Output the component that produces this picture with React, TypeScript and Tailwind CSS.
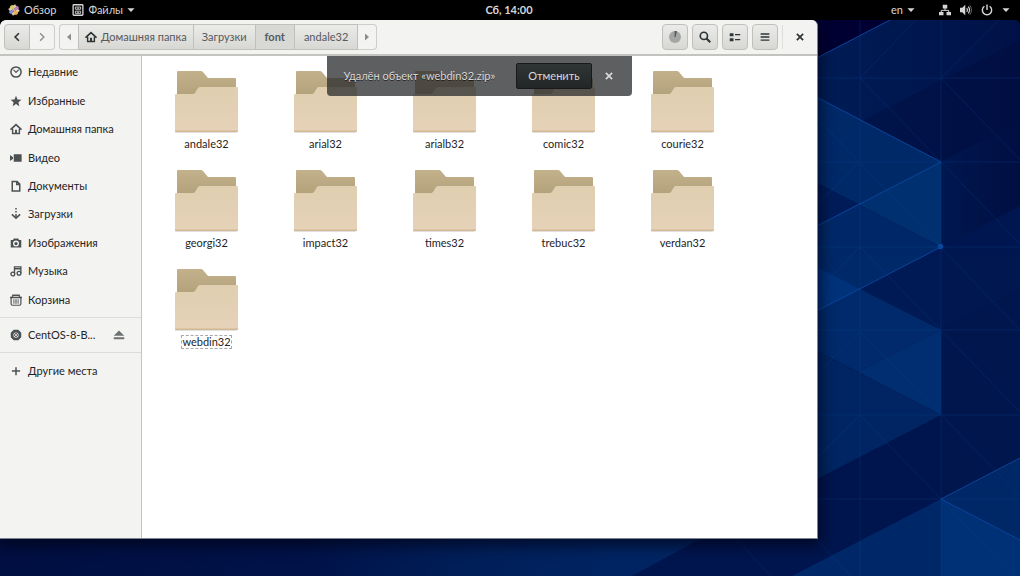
import React from 'react';

const places = [
  { name: 'Недавние', icon: 'recent' },
  { name: 'Избранные', icon: 'star' },
  { name: 'Домашняя папка', icon: 'home' },
  { name: 'Видео', icon: 'video' },
  { name: 'Документы', icon: 'doc' },
  { name: 'Загрузки', icon: 'download' },
  { name: 'Изображения', icon: 'camera' },
  { name: 'Музыка', icon: 'music' },
  { name: 'Корзина', icon: 'trash' },
];

const folders = [
  'andale32', 'arial32', 'arialb32', 'comic32', 'courie32',
  'georgi32', 'impact32', 'times32', 'trebuc32', 'verdan32',
  'webdin32',
];

const shapes: Record<string, React.ReactNode> = {
  recent: <g fill="none" stroke="currentColor"><circle cx="8" cy="8" r="6.8" strokeWidth="2" /><path d="M4.800 5.200 8 8.500 11.500 5" strokeWidth="1.500" /></g>,
  star: <path fill="currentColor" d="m8 1 2 4.900 5.300.4-4.100 3.400 1.300 5.200L8 12.100l-4.500 2.800 1.300-5.200L.7 6.300 6 5.900z" />,
  home: <g fill="none" stroke="currentColor" strokeWidth="1.900"><path d="M.7 9 8 2.200 15.300 9" strokeWidth="2.200" /><path d="M3.500 7.500V14h9V7.500" /><path d="M8 9v5" strokeWidth="2.600" /></g>,
  video: <path fill="currentColor" d="M5 3h10.500v10H5zM0 4l4 3v2l-4 3z" />,
  doc: <path fill="none" stroke="currentColor" strokeWidth="2" d="M3 2h6.500L13 5.500V14.500H3zM9 2v4h4" />,
  download: <g fill="none" stroke="currentColor" strokeWidth="2"><path d="M8 0v2M8 4v2M8 8v5" /><path d="m2.500 8.500 5.500 5 5.500-5" /></g>,
  camera: <path fill="currentColor" fillRule="evenodd" d="M5 2h6l1 2h3v10H1V4h3zM8 4.500a4 4 0 1 0 0 8 4 4 0 0 0 0-8zm0 2a2 2 0 1 1 0 4.500 2 2 0 0 1 0-4.500z" />,
  music: <g fill="none" stroke="currentColor" strokeWidth="1.800"><path d="M6 12V2.500h8.500V11M6 5h8" /><circle cx="3.800" cy="12" r="2.500" /><circle cx="12" cy="11" r="2.500" /></g>,
  trash: <g fill="none" stroke="currentColor"><path d="M0 4.500h16M3 3.500 4 1.500h8l1 2" strokeWidth="2" /><path d="M1.500 5v8q0 2 2 2h9q2 0 2-2V5" strokeWidth="1.600" /><path d="M5 7v6M7 7v6M9 7v6M11 7v6" strokeWidth="1" /></g>,
  disc: <><path fill="currentColor" fillRule="evenodd" d="M5 1h6l4 4v6l-4 4H5l-4-4V5zM8 4.500a3.500 3.500 0 1 0 0 7 3.500 3.500 0 0 0 0-7z" /><circle cx="8" cy="8" r="2" fill="none" stroke="currentColor" strokeWidth="1.300" /></>,
  plus: <path fill="none" stroke="currentColor" strokeWidth="2" d="M8 3v10.500M2.500 8h11" />,
  eject: <path fill="currentColor" d="m8 2 7 7H1zM1 11h14v2.500H1z" />,
  back: <path fill="none" stroke="currentColor" strokeWidth="2.600" d="M11 2 5 8l6 6" />,
  forward: <path fill="none" stroke="currentColor" strokeWidth="2.200" d="m5 2 6 6-6 6" />,
  left: <path fill="currentColor" d="M12 1v14L4 8z" />,
  right: <path fill="currentColor" d="M4 1v14l8-7z" />,
  down: <path fill="currentColor" d="M1 4.500h14L8 12z" />,
  search: <g fill="none" stroke="currentColor" strokeWidth="2.200"><circle cx="6.500" cy="6.500" r="4.800" /><path d="m10 10 5 5" strokeWidth="2.800" /></g>,
  list: <path fill="currentColor" d="M1 3h5v4H1zM1 9.500h5v4H1zM8 4h7v1.800H8zM8 10.500h7v1.800H8z" />,
  menu: <path fill="currentColor" d="M1 2h14v2.200H1zM1 6.900h14v2.200H1zM1 11.800h14V14H1z" />,
  close: <path fill="none" stroke="currentColor" strokeWidth="2.800" d="m3 3 10 10M13 3 3 13" />,
  files: <g fill="none" stroke="currentColor"><rect x="1.500" y="1" width="13" height="14" rx="1" strokeWidth="1.800" /><path d="M4.500 4h7v3h-7zM4.500 9.500h7v3h-7zM6.500 5.500h3M6.500 11h3" strokeWidth="1.200" /></g>,
  network: <g fill="currentColor"><path d="M5 1h6v5H5zM0 10.500h6V15H0zM10 10.500h6V15h-6z" /><path fill="none" stroke="currentColor" strokeWidth="1.300" d="M8 5v3.500M3 11V8.500h10V11" /></g>,
  volume: <g fill="none" stroke="currentColor"><path fill="currentColor" stroke="none" d="M0 5h3l4-4v14l-4-4H0z" /><path d="M9 5.500q2 2.500 0 5M11 3.500q3.500 4.500 0 9" strokeWidth="1.600" /><path d="M13 1.500q4.500 6.500 0 13" strokeWidth="1.300" opacity=".5" /></g>,
  power: <path fill="none" stroke="currentColor" strokeWidth="1.900" d="M4.500 3a6.200 6.200 0 1 0 7 0M8 .5V8" />,
};

function Icon({ name, className = 'size-3' }: { name: string; className?: string }) {
  return <svg viewBox="0 0 16 16" className={`shrink-0 ${className}`} aria-hidden="true">{shapes[name]}</svg>;
}

function Logo() {
  return <svg viewBox="0 0 16 16" className="size-3" aria-hidden="true">
      <g transform="rotate(10 8 8)">
        <path fill="#c8c45a" d="M4 2h4v6H2V4z" />
        <path fill="#b06bb0" d="M8 2h4l2 2v4H8z" />
        <path fill="#e8a33d" d="M8 8h6v4l-2 2H8z" />
        <path fill="#6f78c8" d="M2 8h6v6H4l-2-2z" />
        <path fill="#e0cfa0" d="m8 0 2 3-2 3-2-3zM16 8l-3 2-3-2 3-2zM8 16l-2-3 2-3 2 3zM0 8l3-2 3 2-3 2z" />
        <path stroke="#f0e8e0" strokeWidth=".5" d="m4 4 8 8M12 4l-8 8" />
      </g>
    </svg>;
}

function Folder() {
  return <svg viewBox="1 0 64 64" className="size-16" aria-hidden="true">
      <defs>
        <linearGradient id="folder-back" x1="0" y1="0" x2="0" y2="1">
          <stop offset="0" stopColor="#c2b18b" />
          <stop offset="1" stopColor="#b09e77" />
        </linearGradient>
        <linearGradient id="folder-front" x1="0" y1="0" x2="0" y2="1">
          <stop offset="0" stopColor="#e0ceb0" />
          <stop offset="1" stopColor="#e5d2b8" />
        </linearGradient>
      </defs>
      <path fill="#000" opacity=".12" d="M1 60h62v2q0 1-1 1H2q-1 0-1-1z" />
      <path fill="url(#folder-back)" d="M3 2q0-1 1-1h23q1 0 2 1l5 6h27q1 0 1 1v22H3z" />
      <path fill="url(#folder-front)" d="M1 25q0-1 1-1h17q1 0 2-1l3-5q1-1 2-1h37q1 0 1 1v43q0 1-1 1H2q-1 0-1-1z" />
      <path fill="#d3b993" d="M1 60.500h63q0 1.500-1 1.500H2q-1 0-1-1.500z" />
    </svg>;
}

function Wallpaper() {
  return <svg viewBox="0 0 1020 556" preserveAspectRatio="xMaxYMax slice" className="absolute inset-0 size-full" aria-hidden="true">
      <defs>
        <linearGradient id="night">
          <stop offset="0" stopColor="#000f42" />
          <stop offset=".3" stopColor="#001248" />
          <stop offset=".45" stopColor="#001e58" />
          <stop offset=".6" stopColor="#002462" />
          <stop offset="1" stopColor="#002462" />
        </linearGradient>
        <linearGradient id="upper">
          <stop offset="0" stopColor="#001f5a" />
          <stop offset="1" stopColor="#001247" />
        </linearGradient>
        <linearGradient id="right">
          <stop offset="0" stopColor="#001850" />
          <stop offset="1" stopColor="#000f42" />
        </linearGradient>
      </defs>
      <g transform="translate(0 -20)">
        <rect y="20" width="1020" height="556" fill="url(#night)" />
        <path fill="#00154e" d="M702 538 632 576h388V20H780v518z" />
        <path fill="#000033" d="M780 20h110l-110 57z" />
        <path fill="url(#upper)" d="M780 77 890 20h130v20L780 163z" />
        <path fill="url(#right)" d="M1020 40 780 163v20l161-21 79-41z" />
        <path fill="url(#right)" d="m941 162 79-41v85l-79 41z" />
        <path fill="#001750" d="m941 247 79-41v84l-79 40z" />
        <path fill="#00164d" d="m941 330 79-40v168l-79 41z" />
        <path fill="#002a69" d="m780 78 161 84-83 42-78-40z" />
        <path fill="#001c58" d="m780 164 78 40-78 41z" />
        <path fill="#003070" d="m858 204 83-42v85z" />
        <path fill="#002969" d="m780 245 78-41 83 43-161 83z" />
        <path fill="#00327a" d="m780 248 80 41-80 41z" />
        <path fill="#001a55" d="m860 289 81-42v83z" />
        <path fill="#002a6b" d="m780 330 80-41 81 41-83 42-78-40z" />
        <path fill="#002e70" d="m858 372 83-42v85z" />
        <path fill="#002562" d="m780 332 161 83-161 83z" />
        <path fill="#002869" d="m941 499-149 77h149z" />
        <path fill="#002766" d="m941 499 79-41v82z" />
        <path fill="#003076" d="m941 499 79 41v36h-79z" />
        <g stroke="#0a4a98" strokeWidth="1" opacity=".25" fill="none">
          <path d="M860 20v556M941 20v556M780 78h240M780 162h240M780 247h240M780 330h240M780 415h240M780 499h240" />
          <path d="m860 78 160 166M941 78l79 82M818 119l202 211M860 247l160 165M860 331l160 165M860 415l81 84 72 77M815 538l36 38M735 538l36 38" />
          <path d="m860 78 56-58M941 78l58-58M818 204l42-42M818 290l42-43M818 373l42-42M818 457l42-42" />
        </g>
        <path d="M780 77 890 20M780 78l161 84-161 83M941 247l-161 83M1020 458l-79 41 79 41" stroke="#0b459b" strokeWidth="1" fill="none" />
        <circle cx="940.500" cy="246.500" r="2.800" fill="#0a479b" />
      </g>
    </svg>;
}

const raised = 'border border-[#bfbfbb] bg-linear-to-b from-[#ebebe9] to-[#d7d7d4]';

export default function App() {
  return <div className="relative flex min-h-screen flex-col bg-black font-['Lato','Noto_Sans',sans-serif] text-[11px] leading-4 text-[#2e3436]">
      <header className="relative z-10 flex h-5 items-center justify-between bg-black pr-2.5 pl-2 text-[#d6d6d6]">
        <div className="flex flex-1 items-center gap-4">
          <button className="flex items-center gap-1"><Logo />Обзор</button>
          <button className="flex items-center gap-1"><Icon name="files" />Файлы<Icon name="down" className="size-2" /></button>
        </div>
        <button className="font-bold">Сб, 14:00</button>
        <div className="flex flex-1 items-center justify-end gap-6">
          <button className="flex items-center gap-1">en<Icon name="down" className="size-2" /></button>
          <button className="flex items-center gap-[9px]" aria-label="Система">
            <Icon name="network" /><Icon name="volume" /><Icon name="power" /><Icon name="down" className="size-2" />
          </button>
        </div>
      </header>

      <main className="relative flex flex-1 flex-col overflow-hidden rounded-t-md">
        <Wallpaper />
        <section className="relative mr-[202px] mb-[37px] flex flex-1 flex-col rounded-t-md border-r border-b border-[#7c8490] bg-white shadow-[0_4px_14px_3px_rgba(0,0,15,0.6)]">
          <div className="flex h-9 items-center rounded-t-md border-b-2 border-[#c3c3bf] bg-[#f3f3f2] px-1">
            <div className="flex">
              <button aria-label="Назад" className={`flex h-[26px] w-[26px] items-center justify-center rounded-l-sm ${raised}`}><Icon name="back" className="size-2.5" /></button>
              <button aria-label="Вперёд" className="flex h-[26px] w-[25px] items-center justify-center rounded-r-sm border border-l-0 border-[#cdcdca] text-[#8b8e8f]"><Icon name="forward" className="size-2.5" /></button>
            </div>
            <nav className="ml-1 flex h-[26px] text-[#555a5b]">
              <button aria-label="Влево" className="flex w-[19px] items-center justify-center rounded-l-sm border border-r-0 border-[#cdcdca] text-[#8b8e8f]"><Icon name="left" className="size-2" /></button>
              <button className={`flex items-center gap-1 px-1.5 ${raised}`}><Icon name="home" className="size-3 text-[#2e3436]" />Домашняя папка</button>
              <button className={`border-l-0 px-2 ${raised}`}>Загрузки</button>
              <button className="border-y border-r border-[#bfbfbb] bg-[#d8d8d5] px-[9px] font-bold">font</button>
              <button className={`border-l-0 px-[9px] ${raised}`}>andale32</button>
              <button aria-label="Вправо" className="flex w-[19px] items-center justify-center rounded-r-sm border border-l-0 border-[#cdcdca] text-[#8b8e8f]"><Icon name="right" className="size-2" /></button>
            </nav>
            <div className="ml-auto flex items-center gap-1">
              <button aria-label="Операции" className={`flex size-[26px] items-center justify-center rounded-sm ${raised}`}>
                <svg viewBox="0 0 16 16" className="size-3"><circle cx="8" cy="8" r="8" fill="#a4a6a5" /><path d="M8 8V0q1.500 0 2 .5z" stroke="#555" fill="#555" /></svg>
              </button>
              <button aria-label="Поиск" className={`flex size-[26px] items-center justify-center rounded-sm ${raised}`}><Icon name="search" /></button>
              <button aria-label="Вид" className={`flex size-[26px] items-center justify-center rounded-sm ${raised}`}><Icon name="list" /></button>
              <button aria-label="Меню" className={`flex size-[26px] items-center justify-center rounded-sm ${raised}`}><Icon name="menu" className="size-2.5" /></button>
              <div className="h-6 w-px bg-[#dededc]" />
              <button aria-label="Закрыть" className="flex size-[26px] items-center justify-center"><Icon name="close" className="size-2.5" /></button>
            </div>
          </div>

          <div className="flex flex-1">
            <aside className="w-[142px] shrink-0 border-r border-[#c4c4c1] bg-[#f3f3f2] pt-0.5 text-[#1f2425]">
              <ul className="grid h-[256px] auto-rows-fr">
                {places.map((p) => <li key={p.name} className="flex">
                    <a href="#" className="flex flex-1 items-center gap-1.5 pl-2.5"><Icon name={p.icon} className="size-3 text-[#4c5152]" />{p.name}</a>
                  </li>)}
              </ul>
              <div className="mt-[3px] flex h-9 items-center border-y border-[#dcdcda] pr-4 pl-2.5">
                <a href="#" className="flex flex-1 items-center gap-1.5"><Icon name="disc" className="size-3 text-[#4c5152]" />CentOS-8-B...</a>
                <button aria-label="Извлечь"><Icon name="eject" className="size-3 text-[#6c7172]" /></button>
              </div>
              <a href="#" className="flex h-9 items-center gap-1.5 pl-2.5"><Icon name="plus" className="size-3 text-[#4c5152]" />Другие места</a>
            </aside>

            <div className="relative flex-1">
              <ul className="grid grid-cols-[repeat(auto-fill,119px)] gap-y-1 pt-3.5 pl-[5px] text-[#1f2425]">
                {folders.map((name) => <li key={name} className="flex h-[95px] justify-center">
                    <button className="flex flex-col items-center gap-[3px]">
                      <Folder />
                      <span className={name === 'webdin32' ? 'border border-dashed border-[#a8a8a8] leading-3' : 'py-px leading-3'}>{name}</span>
                    </button>
                  </li>)}
              </ul>
              <div className="absolute inset-x-0 top-0 flex justify-center">
                <div role="status" className="flex h-10 items-center rounded-b bg-[#28292c]/75 pr-[18px] pl-4 text-[#d8d8d6] text-shadow-[0_1px_0_rgba(0,0,0,0.6)]">
                  <span>Удалён объект «webdin32.zip»</span>
                  <button className="ml-[21px] h-[26px] rounded-xs border border-[#17191a] bg-linear-to-b from-[#303536] to-[#222627] px-[11px]">Отменить</button>
                  <button aria-label="Закрыть уведомление" className="ml-3 flex w-2.5 justify-center"><Icon name="close" className="size-2.5" /></button>
                </div>
              </div>
            </div>
          </div>
        </section>
      </main>
    </div>;
}
